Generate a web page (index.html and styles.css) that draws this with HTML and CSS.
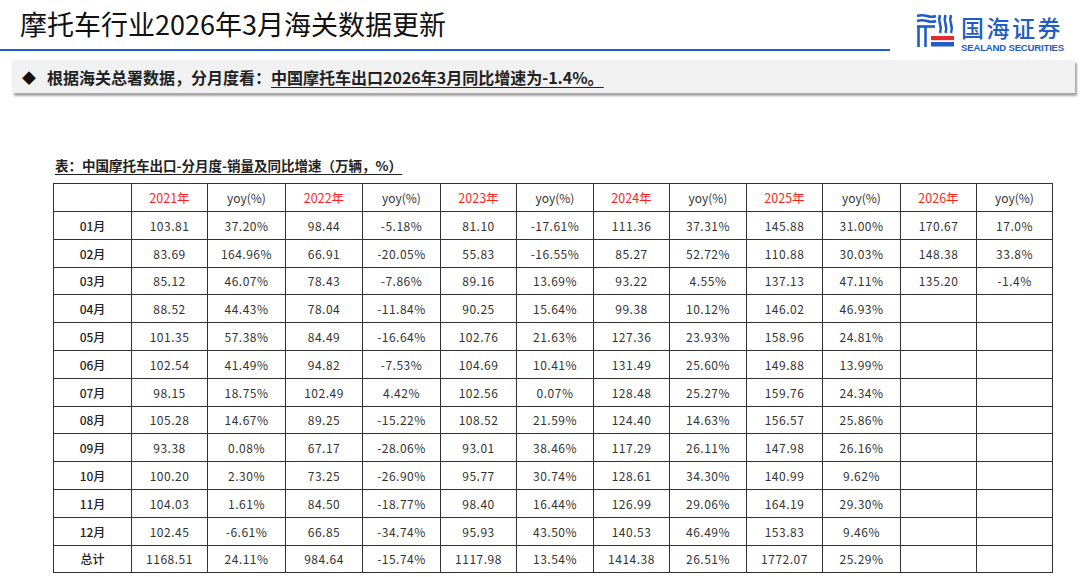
FILE: index.html
```html
<!DOCTYPE html>
<html lang="zh">
<head>
<meta charset="utf-8">
<title>摩托车行业2026年3月海关数据更新</title>
<link rel="stylesheet" href="styles.css">
</head>
<body>
<div class="page">
  <header class="header">
    <div class="title-wrap"><h1 class="title">摩托车行业2026年3月海关数据更新</h1></div>
    <div class="logo">
      <svg class="logo-mark" width="40" height="34" viewBox="2 2 40 34">
        <g fill="none" stroke="#1f5cc6" stroke-width="2.6" stroke-linecap="butt">
          <path d="M4 5 q5 -1.6 10 0 t9 0"/>
          <path d="M4 10 q5 -1.6 10 0 t9 0"/>
          <path d="M4 15.5 H22"/>
          <path d="M5.5 16 V36"/>
          <path d="M12.5 16 V36"/>
          <path d="M27 4 q-1.6 4.5 0 9 t0 9"/>
          <path d="M32.5 4 q-1.6 4.5 0 9 t0 9"/>
          <path d="M38 4 q-1.6 4.5 0 9 t0 9"/>
        </g>
        <rect x="18" y="25" width="23" height="4.2" fill="#e22a32"/>
        <rect x="18" y="31" width="23" height="4.5" fill="#1f5cc6"/>
      </svg>
      <div class="logo-text">
        <div class="logo-cn">国海证券</div>
        <div class="logo-en">SEALAND SECURITIES</div>
      </div>
    </div>
  </header>

  <div class="summary">
    <span class="diamond">◆</span>
    <span class="summary-text">根据海关总署数据，分月度看：<u>中国摩托车出口2026年3月同比增速为-1.4%。</u></span>
  </div>

  <div class="table-area">
    <div class="caption">表：中国摩托车出口-分月度-销量及同比增速（万辆，%）</div>
    <table class="data">
      <colgroup>
        <col class="c78"><col class="c76"><col class="c78"><col class="c77"><col class="c78"><col class="c76"><col class="c77"><col class="c76"><col class="c77"><col class="c76"><col class="c78"><col class="c76"><col class="c76">
      </colgroup>
      <thead>
        <tr><th></th><th class="yr">2021年</th><th>yoy(%)</th><th class="yr">2022年</th><th>yoy(%)</th><th class="yr">2023年</th><th>yoy(%)</th><th class="yr">2024年</th><th>yoy(%)</th><th class="yr">2025年</th><th>yoy(%)</th><th class="yr">2026年</th><th>yoy(%)</th></tr>
      </thead>
      <tbody>
        <tr><td class="m">01月</td><td>103.81</td><td>37.20%</td><td>98.44</td><td>-5.18%</td><td>81.10</td><td>-17.61%</td><td>111.36</td><td>37.31%</td><td>145.88</td><td>31.00%</td><td>170.67</td><td>17.0%</td></tr>
        <tr><td class="m">02月</td><td>83.69</td><td>164.96%</td><td>66.91</td><td>-20.05%</td><td>55.83</td><td>-16.55%</td><td>85.27</td><td>52.72%</td><td>110.88</td><td>30.03%</td><td>148.38</td><td>33.8%</td></tr>
        <tr><td class="m">03月</td><td>85.12</td><td>46.07%</td><td>78.43</td><td>-7.86%</td><td>89.16</td><td>13.69%</td><td>93.22</td><td>4.55%</td><td>137.13</td><td>47.11%</td><td>135.20</td><td>-1.4%</td></tr>
        <tr><td class="m">04月</td><td>88.52</td><td>44.43%</td><td>78.04</td><td>-11.84%</td><td>90.25</td><td>15.64%</td><td>99.38</td><td>10.12%</td><td>146.02</td><td>46.93%</td><td></td><td></td></tr>
        <tr><td class="m">05月</td><td>101.35</td><td>57.38%</td><td>84.49</td><td>-16.64%</td><td>102.76</td><td>21.63%</td><td>127.36</td><td>23.93%</td><td>158.96</td><td>24.81%</td><td></td><td></td></tr>
        <tr><td class="m">06月</td><td>102.54</td><td>41.49%</td><td>94.82</td><td>-7.53%</td><td>104.69</td><td>10.41%</td><td>131.49</td><td>25.60%</td><td>149.88</td><td>13.99%</td><td></td><td></td></tr>
        <tr><td class="m">07月</td><td>98.15</td><td>18.75%</td><td>102.49</td><td>4.42%</td><td>102.56</td><td>0.07%</td><td>128.48</td><td>25.27%</td><td>159.76</td><td>24.34%</td><td></td><td></td></tr>
        <tr><td class="m">08月</td><td>105.28</td><td>14.67%</td><td>89.25</td><td>-15.22%</td><td>108.52</td><td>21.59%</td><td>124.40</td><td>14.63%</td><td>156.57</td><td>25.86%</td><td></td><td></td></tr>
        <tr><td class="m">09月</td><td>93.38</td><td>0.08%</td><td>67.17</td><td>-28.06%</td><td>93.01</td><td>38.46%</td><td>117.29</td><td>26.11%</td><td>147.98</td><td>26.16%</td><td></td><td></td></tr>
        <tr><td class="m">10月</td><td>100.20</td><td>2.30%</td><td>73.25</td><td>-26.90%</td><td>95.77</td><td>30.74%</td><td>128.61</td><td>34.30%</td><td>140.99</td><td>9.62%</td><td></td><td></td></tr>
        <tr><td class="m">11月</td><td>104.03</td><td>1.61%</td><td>84.50</td><td>-18.77%</td><td>98.40</td><td>16.44%</td><td>126.99</td><td>29.06%</td><td>164.19</td><td>29.30%</td><td></td><td></td></tr>
        <tr><td class="m">12月</td><td>102.45</td><td>-6.61%</td><td>66.85</td><td>-34.74%</td><td>95.93</td><td>43.50%</td><td>140.53</td><td>46.49%</td><td>153.83</td><td>9.46%</td><td></td><td></td></tr>
        <tr><td class="m">总计</td><td>1168.51</td><td>24.11%</td><td>984.64</td><td>-15.74%</td><td>1117.98</td><td>13.54%</td><td>1414.38</td><td>26.51%</td><td>1772.07</td><td>25.29%</td><td></td><td></td></tr>
      </tbody>
    </table>
  </div>
</div>
</body>
</html>
```

FILE: styles.css
```css
* { box-sizing: border-box; }
html, body {
  margin: 0;
  padding: 0;
  background: #ffffff;
}
body {
  width: 1080px;
  height: 577px;
  overflow: hidden;
  font-family: "Noto Sans CJK SC", "Noto Sans", sans-serif;
  color: #222;
}
.page {
  width: 1080px;
}
.header {
  display: flex;
  align-items: flex-start;
  height: 51px;
}
.title-wrap {
  width: 890px;
  height: 51px;
  border-bottom: 2.5px solid #1e5fc8;
}
.title {
  margin: 0;
  padding-left: 20px;
  font-size: 27px;
  line-height: 48px;
  font-weight: 400;
  color: #111;
}
.logo {
  display: flex;
  align-items: flex-start;
  margin-left: 25px;
  margin-top: 12px;
}
.logo-mark {
  display: block;
  margin-top: 1px;
}
.logo-text {
  margin-left: 6px;
  display: flex;
  flex-direction: column;
}
.logo-cn {
  font-size: 23px;
  line-height: 24px;
  font-weight: 500;
  color: #1f5cc6;
  letter-spacing: 2.5px;
  margin-top: 3px;
}
.logo-en {
  font-family: "Liberation Sans", Arial, sans-serif;
  font-size: 9.6px;
  line-height: 10px;
  font-weight: 700;
  color: #1f5cc6;
  letter-spacing: -0.2px;
  margin-top: 4px;
}
.summary {
  display: flex;
  align-items: center;
  margin: 9px 5px 0 12px;
  height: 33px;
  background: #f1f1f1;
  box-shadow: 2px 3px 2px rgba(0, 0, 0, 0.35);
  padding-left: 10px;
}
.diamond {
  font-size: 14px;
  color: #111;
  width: 25px;
}
.summary-text {
  font-size: 16px;
  font-weight: 700;
  color: #222;
  line-height: 20px;
}
.summary-text u {
  text-decoration-thickness: 1px;
  text-underline-offset: 3px;
}
.table-area {
  padding-left: 53px;
  margin-top: 63px;
}
.caption {
  padding-left: 2px;
  font-size: 13.5px;
  font-weight: 700;
  line-height: 18px;
  color: #222;
  text-decoration: underline;
  text-underline-offset: 3px;
  margin-bottom: 9px;
}
.data {
  width: 999px;
  border-collapse: collapse;
  table-layout: fixed;
  border: 1.5px solid #333;
}
.c78 { width: 78px; }
.c77 { width: 77px; }
.c76 { width: 76px; }
.data th,
.data td {
  border: 1px solid #333;
  height: 27.8px;
  padding: 0;
  text-align: center;
  font-size: 12px;
  font-weight: 400;
  color: #333;
  white-space: nowrap;
  letter-spacing: 0.5px;
}
.data th {
  height: 28px;
  letter-spacing: 0;
}
.data th.yr {
  color: #ff1f1f;
  font-size: 12.5px;
}
.data td.m {
  color: #222;
  font-weight: 500;
  letter-spacing: 0;
}
```
